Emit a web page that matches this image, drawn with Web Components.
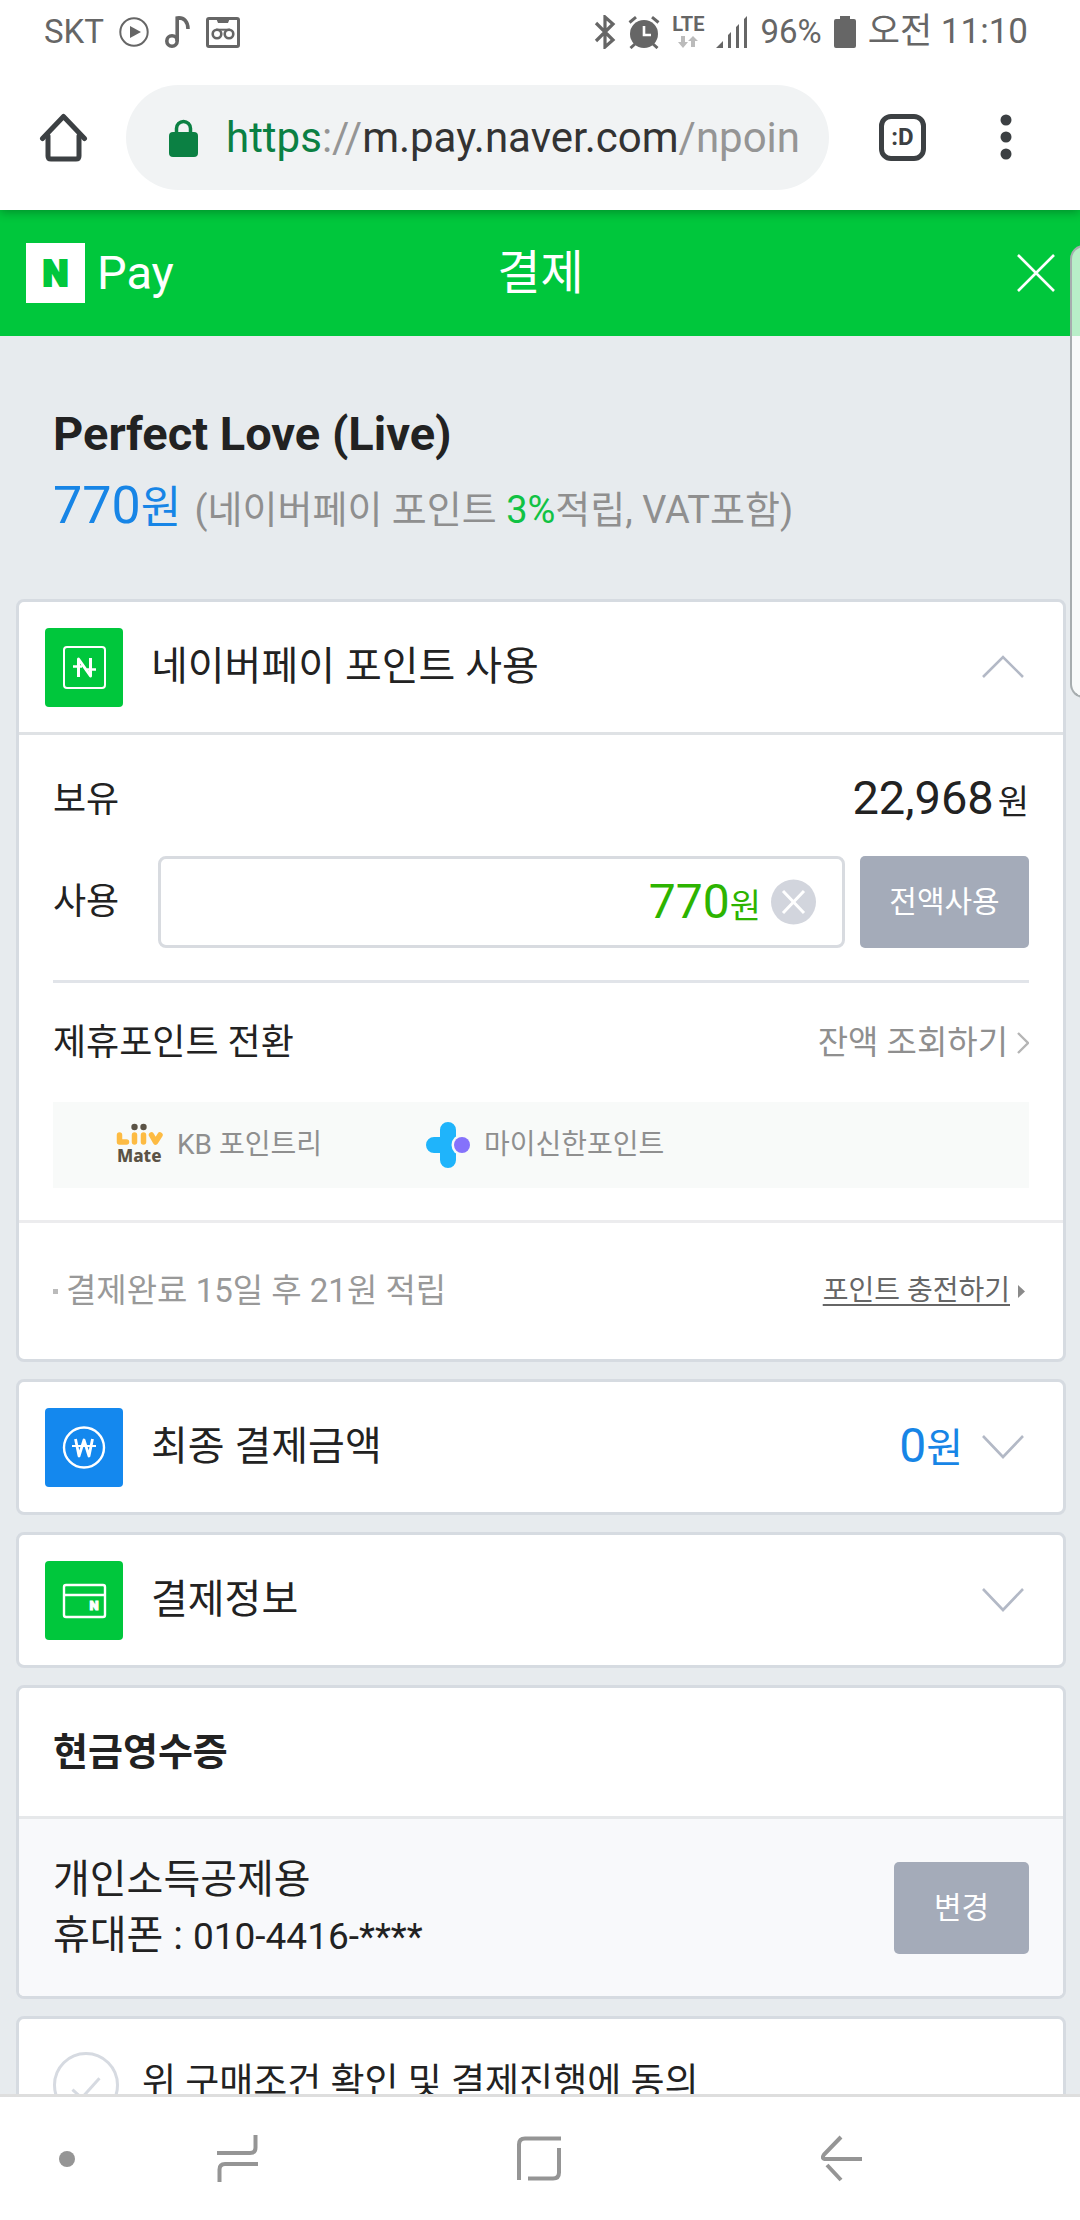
<!DOCTYPE html>
<html lang="ko">
<head>
<meta charset="utf-8">
<meta name="viewport" content="width=device-width">
<title>결제</title>
<style>
  html, body { margin: 0; height: 100%; }
  body { font-family: Roboto, "Noto Sans CJK KR", sans-serif; color: #222; background: #fff; }
</style>
</head>
<body>
<phone-screen>
  <status-bar slot="top"></status-bar>
  <browser-bar slot="top"></browser-bar>
  <pay-header heading="결제"></pay-header>
  <order-summary></order-summary>
  <card-stack>
    <pay-card>
      <card-heading icon="point" open>네이버페이 포인트 사용</card-heading>
      <point-panel></point-panel>
    </pay-card>
    <pay-card>
      <card-heading icon="won" amount="0">최종 결제금액</card-heading>
    </pay-card>
    <pay-card>
      <card-heading icon="card">결제정보</card-heading>
    </pay-card>
    <pay-card>
      <cash-receipt></cash-receipt>
    </pay-card>
    <pay-card>
      <agree-row>위 구매조건 확인 및 결제진행에 동의</agree-row>
    </pay-card>
  </card-stack>
  <nav-bar slot="bottom"></nav-bar>
</phone-screen>

<script>
const RESET = `
  *, *::before, *::after { box-sizing: border-box; }
  :host { display: block; box-sizing: border-box; }
  button { font: inherit; color: inherit; border: 0; padding: 0; margin: 0; background: none; display: flex; align-items: center; justify-content: center; }
  a { color: inherit; text-decoration: none; }
  h1, h2, p { margin: 0; font-weight: 400; }
  svg { display: block; flex: none; }
`;

function define(name, render) {
  customElements.define(name, class extends HTMLElement {
    connectedCallback() {
      if (this.shadowRoot) return;
      const root = this.attachShadow({ mode: 'open' });
      const t = document.createElement('template');
      const { css, html } = render(this);
      t.innerHTML = `<style>${RESET}${css}</style>${html}`;
      root.append(t.content.cloneNode(true));
    }
  });
}

define('phone-screen', () => ({
  css: `
    :host { display: flex; flex-direction: column; height: 100vh; position: relative; overflow: hidden; }
    main { flex: 1; min-height: 0; overflow: hidden; background: #e7ebee; }
    .edge { position: absolute; right: -4px; top: 245px; width: 14px; height: 453px; border: 2px solid #a7adaf; border-radius: 14px 0 0 14px; background: rgba(255,255,255,.72); }
  `,
  html: `<slot name="top"></slot><main><slot></slot></main><slot name="bottom"></slot><div class="edge"></div>`
}));

define('status-bar', () => ({
  css: `
    :host { display: flex; align-items: center; justify-content: space-between; height: 64px; padding: 0 52px 0 44px; color: #666; font-size: 33px; line-height: 40px; flex: none; position: relative; z-index: 2; background: #fff; }
    div { display: flex; align-items: center; }
    .l { gap: 15px; }
    .r { gap: 12px; }
    .time { font-size: 35px; }
    .net { flex-direction: column; gap: 4px; font: 700 20px/16px Roboto, sans-serif; }
  `,
  html: `
    <div class="l">
      <span>SKT</span>
      <svg width="30" height="30" viewBox="0 0 30 30"><circle cx="15" cy="15" r="13.7" fill="none" stroke="#666" stroke-width="2"/><path d="M11 9l11 6-11 6z" fill="#666"/></svg>
      <svg width="27" height="32" viewBox="0 0 27 32" fill="none" stroke="#666" stroke-width="3.6"><circle cx="8" cy="25" r="5.2"/><path d="M13.2 25V2c7-1 10.800 4 10.800 11"/></svg>
      <svg width="34" height="31" viewBox="0 0 34 31" fill="none" stroke="#666"><rect x="1.500" y="1.500" width="31" height="28" rx="1.500" stroke-width="3"/><path d="M10 1h14l-2 5H12z" fill="#666" stroke="none"/><circle cx="11" cy="17" r="4.300" stroke-width="2.600"/><circle cx="23" cy="17" r="4.300" stroke-width="2.600"/><path d="M10 12.700h14" stroke-width="2"/></svg>
    </div>
    <div class="r">
      <svg width="22" height="34" viewBox="0 0 22 34" fill="none" stroke="#666" stroke-width="3.200"><path d="M2 8l17 17-8 7V2l8 7L2 26"/></svg>
      <svg width="32" height="33" viewBox="0 0 32 33"><circle cx="16" cy="18" r="14" fill="#666"/><path d="M1.500 6.500L8 1.200M30.500 6.500L24 1.200M7 28l-4.500 4M25 28l4.500 4" stroke="#666" stroke-width="3"/><path d="M16 10v9h7" fill="none" stroke="#fff" stroke-width="2.600"/></svg>
      <div class="net"><span>LTE</span><svg width="20" height="12" viewBox="0 0 20 12" fill="#bbb"><path d="M3 0h4v6h3l-5 6-5-6h3zM13 11h4V5h3l-5-5-5 5h3z"/></svg></div>
      <svg width="32" height="32" viewBox="0 0 32 32" fill="#666"><path d="M0 32l7-7v7zM12 19l3-3v16h-3zM20 11l3-3v24h-3zM28 3l3-3v32h-3z"/></svg>
      <span>96%</span>
      <svg width="22" height="32" viewBox="0 0 22 32" fill="#666"><path d="M6 0h10v3h4q2 0 2 2v25q0 2-2 2H2q-2 0-2-2V5q0-2 2-2h4z"/></svg>
      <span class="time">오전 11:10</span>
    </div>`
}));

define('browser-bar', () => ({
  css: `
    :host { display: flex; align-items: center; height: 146px; padding: 0 68px 0 39px; flex: none; position: relative; z-index: 1; background: #fff; box-shadow: 0 2px 10px rgba(0,0,0,.3); }
    .url { flex: 1; min-width: 0; height: 105px; margin: 0 50px 0 38px; padding: 2px 25px 0 43px; border-radius: 53px; background: #f1f3f4; display: flex; align-items: center; gap: 28px; font-size: 42px; line-height: 56px; color: #333; overflow: hidden; white-space: nowrap; }
    .url b { font-weight: 400; color: #0b8043; }
    .url i { font-style: normal; color: #959595; }
    .tabs { width: 47px; height: 47px; border: 5px solid #3c4043; border-radius: 12px; font-size: 24px; line-height: 28px; font-weight: 700; color: #3c4043; margin-right: 74px; }
  `,
  html: `
    <button aria-label="홈"><svg width="49" height="50" viewBox="0 0 49 50" fill="none" stroke="#3c4043" stroke-width="5" stroke-linejoin="round" stroke-linecap="round"><path d="M3.500 26.500L24.500 4.500l21 22"/><path d="M9 24v20q0 3 3 3h25q3 0 3-3V24"/></svg></button>
    <div class="url">
      <svg width="29" height="38" viewBox="0 0 29 38"><path d="M7.500 16V9.500a7 7 0 0114 0V16" fill="none" stroke="#0b8043" stroke-width="3.500"/><rect y="13" width="29" height="25" rx="4" fill="#0b8043"/></svg>
      <span><b>https</b><i>://</i>m.pay.naver.com<i>/npoin</i></span>
    </div>
    <button class="tabs" aria-label="탭">:D</button>
    <button aria-label="메뉴"><svg width="12" height="46" viewBox="0 0 12 46" fill="#3c4043"><circle cx="6" cy="6" r="5.500"/><circle cx="6" cy="23" r="5.500"/><circle cx="6" cy="40" r="5.500"/></svg></button>`
}));

define('pay-header', el => ({
  css: `
    :host { display: grid; grid-template-columns: 1fr auto 1fr; align-items: center; height: 126px; padding: 0 25px 0 26px; background: #00c73c; color: #fff; }
    .logo { display: flex; align-items: center; gap: 12px; font-size: 47px; line-height: 56px; }
    h1 { font-size: 47px; line-height: 60px; }
    button { justify-self: end; }
  `,
  html: `
    <a class="logo" href="#">
      <svg width="59" height="60" viewBox="0 0 59 60"><rect width="59" height="60" fill="#fff"/><text x="29.500" y="43" text-anchor="middle" font-family="Roboto, sans-serif" font-weight="900" font-size="37" fill="#00c73c" stroke="#00c73c" stroke-width="2">N</text></svg>
      <span>Pay</span>
    </a>
    <h1>${el.getAttribute('heading')}</h1>
    <button aria-label="닫기"><svg width="38" height="38" viewBox="0 0 38 38" stroke="#fff" stroke-width="2.600"><path d="M1 1l36 36M37 1L1 37"/></svg></button>`
}));

define('order-summary', () => ({
  css: `
    :host { padding: 66px 53px 52px; }
    h2 { font-size: 47px; line-height: 64px; font-weight: 700; margin-bottom: 8px; }
    p { font-size: 38px; line-height: 73px; color: #8f8f8f; white-space: nowrap; }
    strong { font-weight: 400; font-size: 52px; line-height: 1; color: #1785e6; margin-right: 4px; }
    strong span { font-size: 44px; }
    em { font-style: normal; color: #11c244; }
  `,
  html: `<h2>Perfect Love (Live)</h2>
    <p><strong>770<span>원</span></strong> (네이버페이 포인트 <em>3%</em>적립, VAT포함)</p>`
}));

define('card-stack', () => ({
  css: `:host { display: flex; flex-direction: column; gap: 17px; padding: 0 14px 0 16px; }`,
  html: `<slot></slot>`
}));

define('pay-card', () => ({
  css: `:host { border: 3px solid #d6dbe1; border-radius: 8px; background: #fff; overflow: hidden; }`,
  html: `<slot></slot>`
}));

const HEAD_ICONS = {
  point: ['#00c73c', `<rect x="19" y="19" width="41" height="41" rx="3" stroke-width="2"/><path d="M33.500 49V31l12 17V30" stroke-width="3" stroke-linejoin="round"/><path d="M28 38.500h9M42 41.500h9" stroke-width="2.500"/>`],
  won: ['#1488ee', `<circle cx="39" cy="39.500" r="20" stroke-width="2.400"/><path d="M30.500 31l3.500 17 5-16 5 16 3.500-17" stroke-width="2.800" stroke-linejoin="round"/><path d="M27 38h24" stroke-width="2"/>`],
  card: ['#00c73c', `<rect x="19" y="24" width="41" height="32" rx="2" stroke-width="2.400"/><path d="M19 34h41" stroke-width="2.400"/><text x="49" y="49" text-anchor="middle" font-family="Roboto, sans-serif" font-weight="900" font-size="13" fill="#fff" stroke-width="1">N</text>`]
};

define('card-heading', el => {
  const [bg, art] = HEAD_ICONS[el.getAttribute('icon')];
  const open = el.hasAttribute('open');
  const amount = el.getAttribute('amount');
  return {
    css: `
      button { width: 100%; height: 130px; padding: 0 39px 0 26px; gap: 28px; justify-content: flex-start; font-size: 40px; line-height: 56px; text-align: left; }
      .t { flex: 1; }
      .amt { color: #1785e6; font-size: 48px; margin-right: -9px; }
      .amt span { font-size: 40px; }
      :host([open]) { border-bottom: 3px solid #dfe2e5; }
    `,
    html: `<button aria-expanded="${open}">
      <svg width="78" height="79" viewBox="0 0 78 79" fill="none" stroke="#fff"><rect width="78" height="79" rx="4" fill="${bg}" stroke="none"/>${art}</svg>
      <span class="t"><slot></slot></span>
      ${amount === null ? '' : `<span class="amt">${amount}<span>원</span></span>`}
      <svg width="42" height="24" viewBox="0 0 42 24" fill="none" stroke="#b3b9c6" stroke-width="2.600"><path d="${open ? 'M1 22L21 2l20 20' : 'M1 1l20 21L41 1'}"/></svg>
    </button>`
  };
});

define('gray-button', () => ({
  css: `
    :host { display: flex; flex: none; }
    button { width: 100%; height: 92px; border-radius: 5px; background: #a4abb9; color: #fff; font-size: 30px; line-height: 44px; white-space: nowrap; }
  `,
  html: `<button><slot></slot></button>`
}));

define('point-panel', () => ({
  css: `
    .body { padding: 0 34px; }
    .row { display: flex; align-items: center; justify-content: space-between; font-size: 36px; line-height: 50px; }
    .have { height: 121px; padding-top: 8px; }
    .use { height: 92px; gap: 15px; }
    .use > label { width: 90px; }
    .sum { font-size: 47px; }
    .sum small { font-size: 34px; margin-left: 4px; }
    .field { flex: 1; min-width: 0; height: 92px; border: 3px solid #d8dbe0; border-radius: 8px; display: flex; align-items: center; justify-content: flex-end; color: #2db400; padding-right: 26px; }
    .field > div { flex: 1; min-width: 0; display: flex; align-items: baseline; }
    input { flex: 1; min-width: 0; width: 0; border: 0; padding: 0; background: none; outline: 0; font: inherit; font-size: 48px; line-height: 60px; height: 60px; color: inherit; text-align: right; }
    .field label { font-size: 34px; margin-right: 10px; }
    gray-button { width: 169px; }
    .conv { height: 122px; margin-top: 32px; border-top: 3px solid #e1e4e9; }
    .conv a { display: flex; align-items: center; gap: 9px; font-size: 33px; color: #8f8f8f; }
    .partners { display: grid; grid-template-columns: 310px auto 1fr; align-items: center; height: 86px; padding-left: 63px; background: #f8faf9; color: #8f8f8f; font-size: 28px; line-height: 40px; margin-bottom: 32px; }
    .partners a { display: flex; align-items: center; gap: 14px; }
    .note { height: 139px; padding: 0 34px; border-top: 3px solid #ececee; color: #999; font-size: 33px; }
    .note span { display: flex; align-items: center; gap: 8px; }
    .note i { width: 5px; height: 5px; background: #bbb; }
    .note a { display: flex; align-items: center; gap: 8px; font-size: 28px; color: #666; padding-right: 4px; }
    .note u { text-underline-offset: 4px; text-decoration-thickness: 2px; text-decoration-skip-ink: none; }
  `,
  html: `
    <div class="body">
      <div class="row have"><span>보유</span><span class="sum">22,968<small>원</small></span></div>
      <div class="row use">
        <label for="amt">사용</label>
        <div class="field">
          <div><input id="amt" type="text" inputmode="numeric" value="770"><label for="amt">원</label></div>
          <button aria-label="지우기"><svg width="45" height="46" viewBox="0 0 45 46"><circle cx="22.500" cy="23" r="22.500" fill="#d2d5dd"/><path d="M12 12l21 22M33 12L12 34" stroke="#fff" stroke-width="3"/></svg></button>
        </div>
        <gray-button>전액사용</gray-button>
      </div>
      <div class="row conv"><span>제휴포인트 전환</span>
        <a href="#">잔액 조회하기<svg width="12" height="24" viewBox="0 0 12 24" fill="none" stroke="#b5b5b5" stroke-width="2.400"><path d="M1 2l10 10L1 22"/></svg></a></div>
      <div class="partners">
        <a href="#"><svg width="47" height="46" viewBox="0 0 47 46" font-family="'Noto Sans', sans-serif" font-weight="800">
          <g fill="none" stroke="#fdbb43" stroke-width="5.500" stroke-linecap="round" stroke-linejoin="round"><path d="M3.500 13v7h7M18.500 13v7M27.500 13v7M35.500 13l4 7 4.500-7"/></g>
          <circle cx="18.500" cy="5" r="3.200" fill="#5b5346"/><circle cx="27.500" cy="5" r="3.200" fill="#5b5346"/>
          <text x="1" y="40" font-size="17" fill="#5b5346">Mate</text></svg>KB 포인트리</a>
        <a href="#"><svg width="44" height="46" viewBox="0 0 44 46"><path d="M8 23h24M22 8v30" stroke="#1fb4fb" stroke-width="16" stroke-linecap="round"/><circle cx="36" cy="23" r="10.500" fill="#f8faf9"/><circle cx="36" cy="23" r="8" fill="#8572fb"/></svg>마이신한포인트</a>
      </div>
    </div>
    <div class="row note"><span><i></i>결제완료 15일 후 21원 적립</span>
      <a href="#"><u>포인트 충전하기</u><svg width="7" height="13" viewBox="0 0 7 13"><path d="M0 0l7 6.500L0 13z" fill="#8a8a8a"/></svg></a></div>`
}));

define('cash-receipt', () => ({
  css: `
    h2 { height: 128px; padding: 0 34px; display: flex; align-items: center; font-size: 38px; line-height: 56px; font-weight: 700; }
    .info { display: flex; align-items: center; justify-content: space-between; height: 180px; padding: 0 34px; border-top: 3px solid #e6e8ea; background: #f8f9fb; font-size: 40px; line-height: 56px; }
    .info span { font-size: 37px; line-height: 1; }
    gray-button { width: 135px; }
  `,
  html: `<h2>현금영수증</h2>
    <div class="info"><div><p>개인소득공제용</p><p>휴대폰 : <span>010-4416-****</span></p></div><gray-button>변경</gray-button></div>`
}));

define('agree-row', () => ({
  css: `
    label { display: flex; align-items: center; gap: 23px; height: 131px; padding: 0 34px; font-size: 37px; line-height: 56px; }
    input { appearance: none; flex: none; width: 66px; height: 66px; margin: 0; border: 3px solid #d6dae1; border-radius: 50%; display: grid; place-items: center; }
    input::before { content: ""; width: 14px; height: 28px; border: solid #d6dae1; border-width: 0 3px 3px 0; transform: rotate(42deg); }
    span { padding-bottom: 4px; }
  `,
  html: `<label><input type="checkbox"><span><slot></slot></span></label>`
}));

define('nav-bar', () => ({
  css: `
    :host { flex: none; display: flex; align-items: center; height: 126px; padding: 0 88px 0 48px; border-top: 3px solid #dedede; background: #fff; }
    .dot { width: 38px; }
    .keys { flex: 1; display: grid; grid-template-columns: repeat(3, 1fr); }
  `,
  html: `
    <button class="dot" aria-label="표시"><svg width="16" height="16"><circle cx="8" cy="8" r="8" fill="#959595"/></svg></button>
    <div class="keys">
      <button aria-label="최근 앱"><svg width="41" height="47" viewBox="0 0 41 47" fill="none" stroke="#959595" stroke-width="4"><path d="M0 18h33q5.500 0 5.500-5.500V0M41 29H8q-5.500 0-5.500 5.500V47"/></svg></button>
      <button aria-label="홈"><svg width="44" height="45" viewBox="0 0 44 45" fill="none" stroke="#959595" stroke-width="4"><path d="M44 2.500H8q-6 0-6 6V44M11 42.500h25q6 0 6-6V12"/></svg></button>
      <button aria-label="뒤로"><svg width="41" height="47" viewBox="0 0 41 47" fill="none" stroke="#959595" stroke-width="4"><path d="M20 2L3 19.500Q0 24 5 24h36M6 30l14 15"/></svg></button>
    </div>`
}));
</script>
</body>
</html>
